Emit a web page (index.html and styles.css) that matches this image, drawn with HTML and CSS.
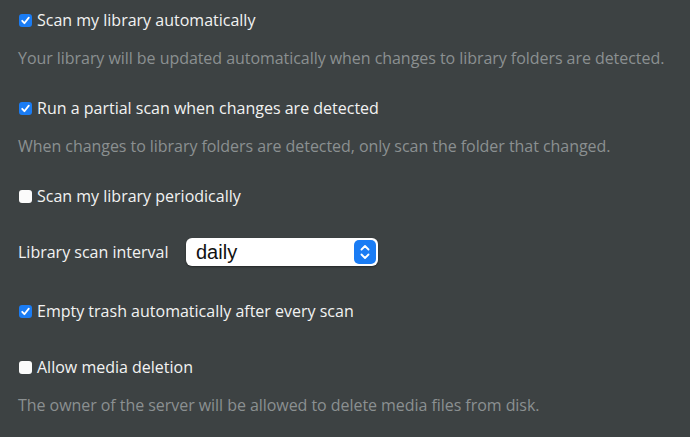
FILE: index.html
```html
<!DOCTYPE html>
<html lang="en">
<head>
    <meta charset="UTF-8">
    <title>Library settings</title>
    <link rel="stylesheet" href="styles.css">
</head>
<body>
    <div class="settings">
        <div class="setting has-desc">
            <label class="option">
                <span class="check on"><svg viewBox="0 0 13 13"><path d="M3.2 6.8 L5.4 9.2 L9.8 3.6"/></svg></span>
                Scan my library automatically
            </label>
            <p class="desc">Your library will be updated automatically when changes to library folders are detected.</p>
        </div>

        <div class="setting has-desc">
            <label class="option">
                <span class="check on"><svg viewBox="0 0 13 13"><path d="M3.2 6.8 L5.4 9.2 L9.8 3.6"/></svg></span>
                Run a partial scan when changes are detected
            </label>
            <p class="desc">When changes to library folders are detected, only scan the folder that changed.</p>
        </div>

        <div class="setting before-select">
            <label class="option">
                <span class="check"></span>
                Scan my library periodically
            </label>
        </div>

        <div class="setting interval">
            <span class="field-label">Library scan interval</span>
            <div class="select">
                <span class="select-value">daily</span>
                <span class="select-btn">
                    <svg viewBox="0 0 22 24"><path d="M7.5 9.5 L11 6 L14.5 9.5 M7.5 14.5 L11 18 L14.5 14.5"/></svg>
                </span>
            </div>
        </div>

        <div class="setting">
            <label class="option">
                <span class="check on"><svg viewBox="0 0 13 13"><path d="M3.2 6.8 L5.4 9.2 L9.8 3.6"/></svg></span>
                Empty trash automatically after every scan
            </label>
        </div>

        <div class="setting has-desc">
            <label class="option">
                <span class="check"></span>
                Allow media deletion
            </label>
            <p class="desc">The owner of the server will be allowed to delete media files from disk.</p>
        </div>
    </div>
</body>
</html>
```

FILE: styles.css
```css
* {
    margin: 0;
    padding: 0;
    box-sizing: border-box;
}

body {
    background: #3d4243;
    font-family: 'Open Sans', sans-serif;
    color: #f2f2f2;
    padding: 10px 18px;
    overflow: hidden;
}

.setting {
    margin-bottom: 36px;
}

.setting.has-desc {
    margin-bottom: 30px;
}

.setting.before-select {
    margin-bottom: 32px;
}

.option {
    display: flex;
    align-items: center;
    gap: 5px;
    font-size: 16px;
    line-height: 20px;
    padding-left: 1px;
}

.check {
    width: 13px;
    height: 13px;
    border-radius: 3px;
    background: #fbfbfb;
    flex-shrink: 0;
    display: flex;
}

.check.on {
    background: #1a7cf4;
}

.check svg {
    width: 13px;
    height: 13px;
    fill: none;
    stroke: #fff;
    stroke-width: 1.8;
    stroke-linecap: round;
    stroke-linejoin: round;
}

.desc {
    margin-top: 18px;
    font-size: 16px;
    line-height: 20px;
    color: #8b9091;
    letter-spacing: -0.05px;
    white-space: nowrap;
}

.interval {
    display: flex;
    align-items: center;
    height: 28px;
    margin-bottom: 35px;
}

.field-label {
    font-size: 16px;
    width: 168px;
}

.select {
    width: 192px;
    height: 28px;
    background: #fff;
    border-radius: 6px;
    display: flex;
    align-items: center;
    justify-content: space-between;
    padding: 0 2px 0 10px;
    box-shadow: 0 1px 2px rgba(0, 0, 0, 0.4);
}

.select-value {
    font-family: 'Liberation Sans', Arial, sans-serif;
    font-size: 20px;
    color: #111;
}

.select-btn {
    width: 22px;
    height: 24px;
    border-radius: 5px;
    background: #1a7cf4;
    display: flex;
}

.select-btn svg {
    width: 22px;
    height: 24px;
    fill: none;
    stroke: #fff;
    stroke-width: 1.8;
    stroke-linecap: round;
    stroke-linejoin: round;
}
```
